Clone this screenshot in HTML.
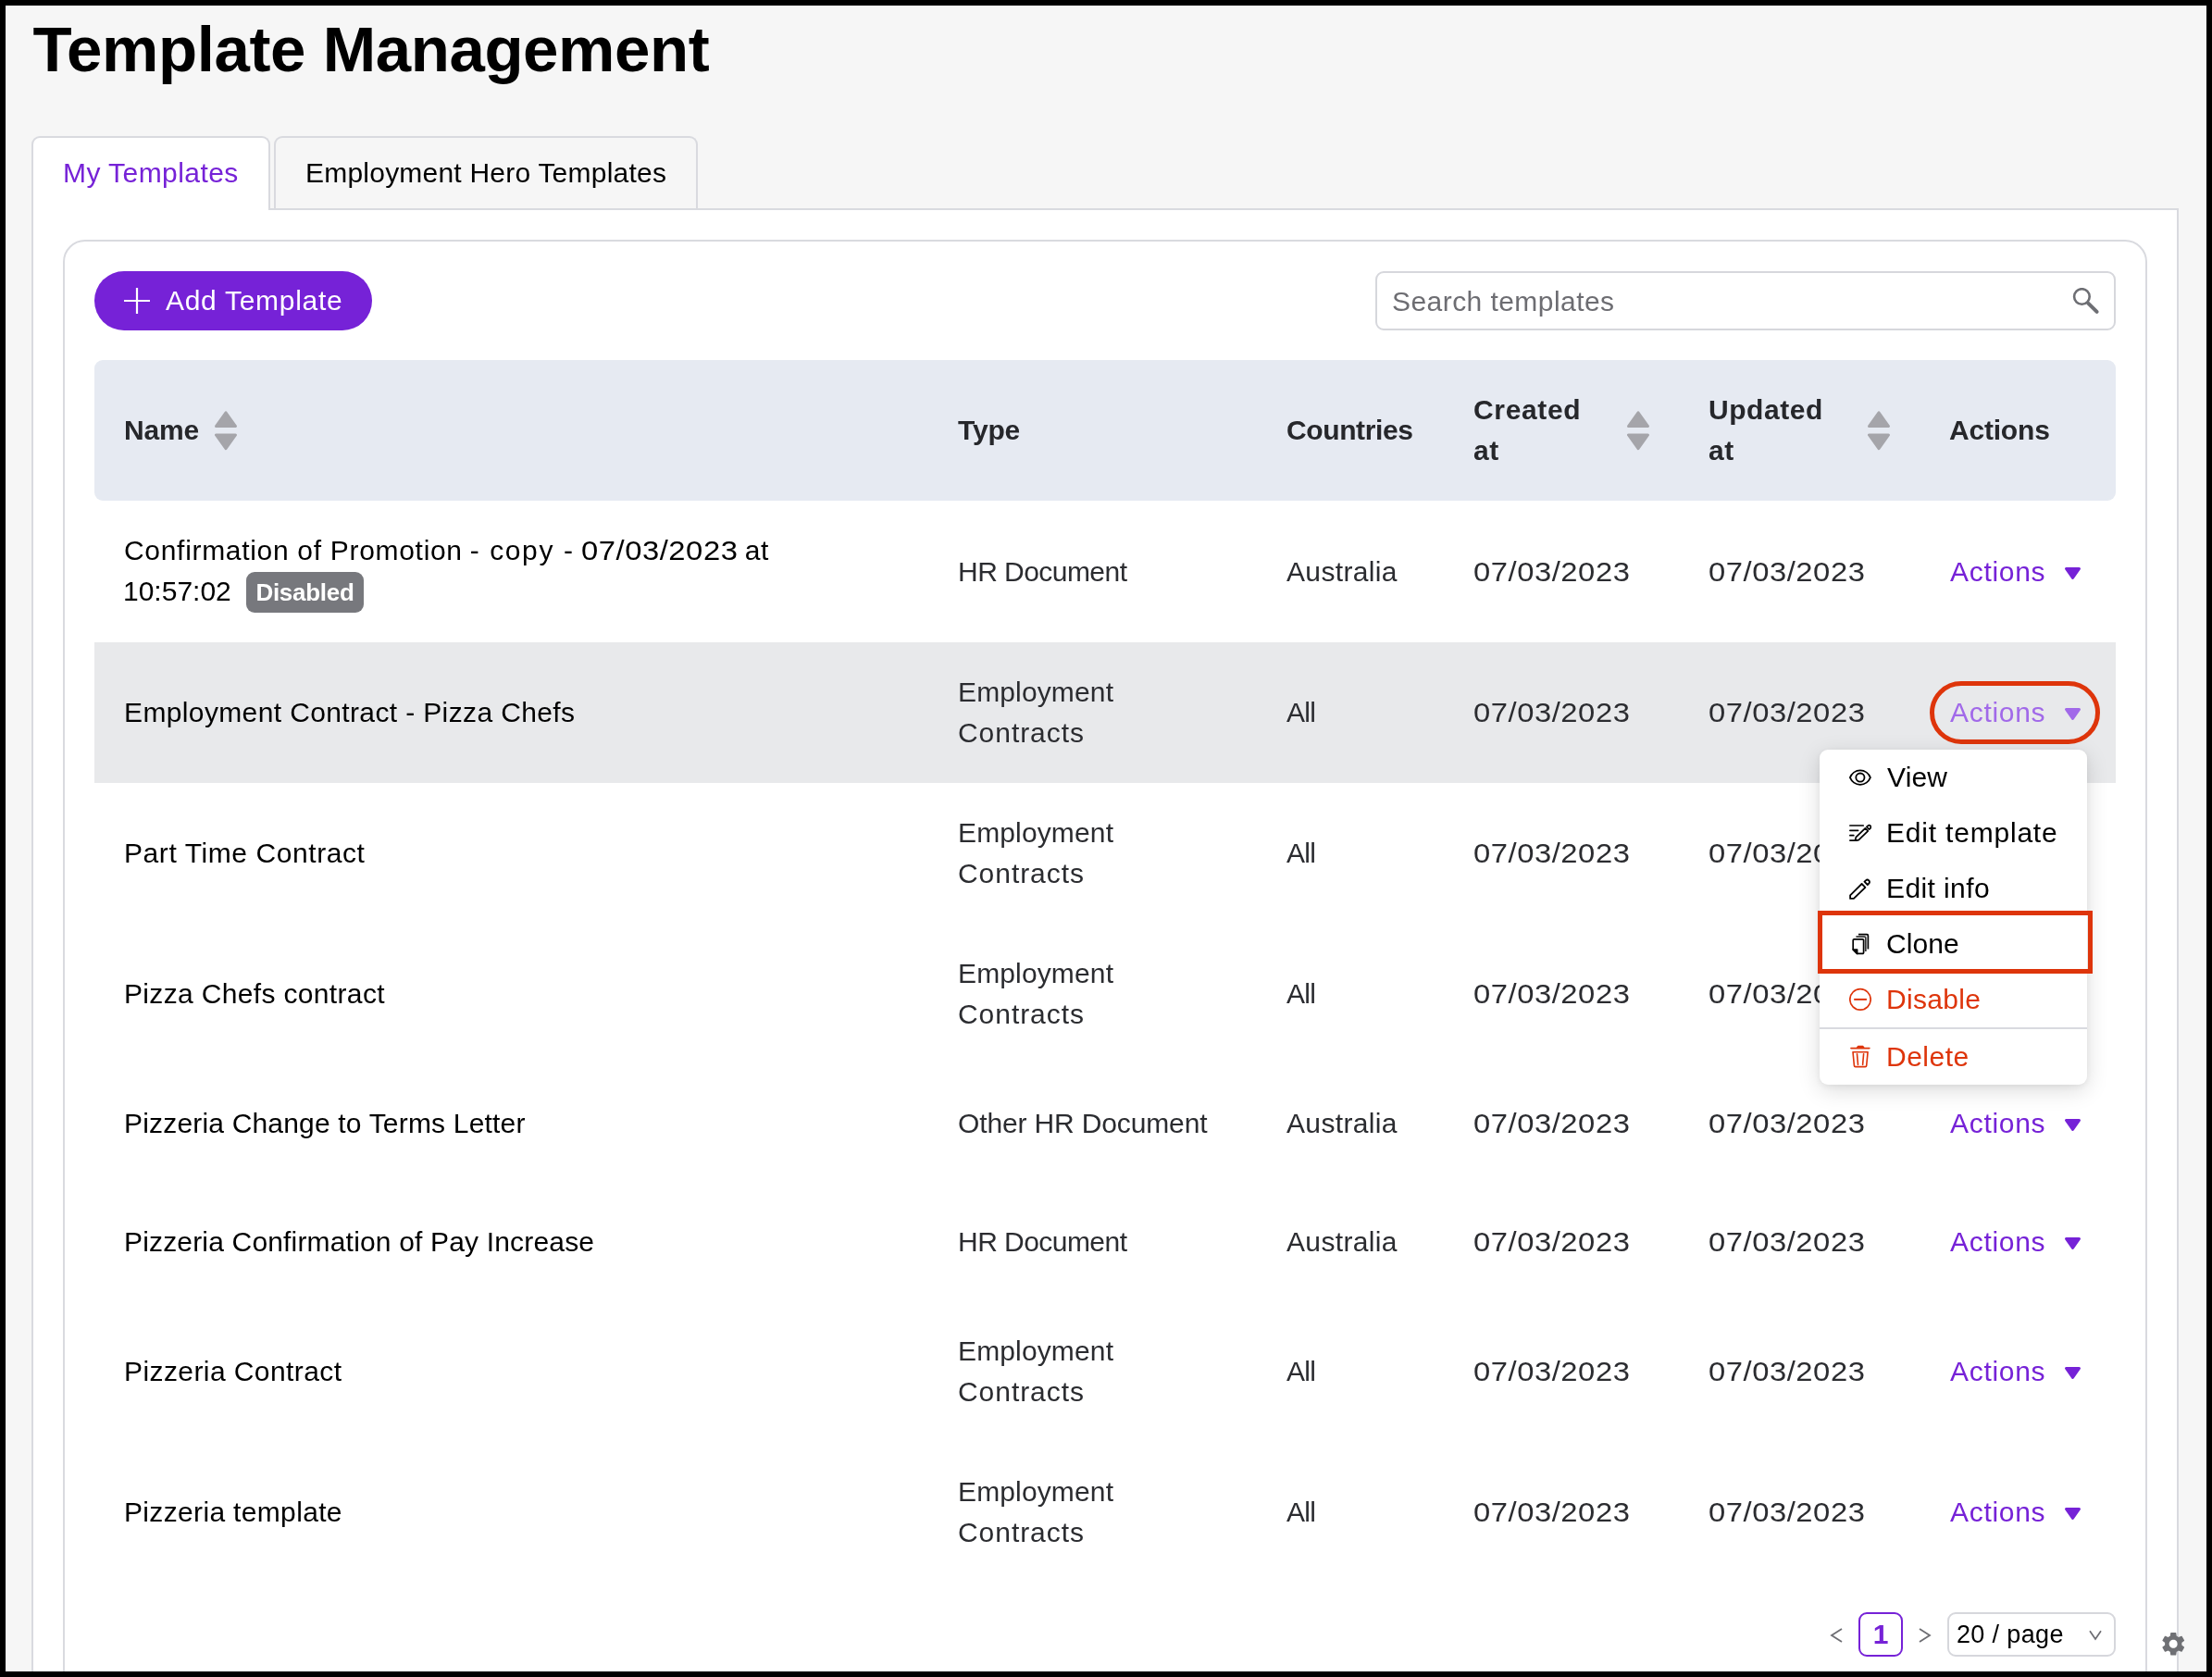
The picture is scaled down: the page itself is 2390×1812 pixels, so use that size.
<!DOCTYPE html>
<html lang="en">
<head>
<meta charset="utf-8">
<title>Template Management</title>
<style>
*{box-sizing:border-box;margin:0;padding:0}
html,body{width:2390px;height:1812px;overflow:hidden;background:#000}
body{font-family:"Liberation Sans",sans-serif;font-size:30px;line-height:44px;color:#000;-webkit-font-smoothing:antialiased}
#frame{position:absolute;left:6px;top:6px;width:2378px;height:1800px;background:#f6f6f6;overflow:hidden}
/* everything inside #app is positioned in page coordinates */
#app{position:absolute;left:-6px;top:-6px;width:2390px;height:1812px;will-change:transform}
.abs{position:absolute;white-space:nowrap}
h1{position:absolute;left:35.5px;top:14px;font-size:69px;line-height:80px;font-weight:bold;letter-spacing:-.42px;color:#000;white-space:nowrap}
.tab{position:absolute;top:147px;height:80px;border:2px solid #d9dadf;border-bottom:none;border-radius:9px 9px 0 0;white-space:nowrap;padding-top:16px;line-height:44px}
#tab1{left:34px;width:258px;background:#fff;color:#7622d7;padding-left:32px;z-index:2;height:80px}
#tab2{left:296px;width:458px;background:#f6f6f6;color:#000;padding-left:32px}
#panel{position:absolute;left:34px;top:225px;width:2320px;height:1700px;background:#fff;border:2px solid #d9dadf}
#card{position:absolute;left:68px;top:259px;width:2252px;height:1700px;background:#fff;border:2px solid #d9dadf;border-radius:24px}
#addbtn{position:absolute;left:102px;top:293px;width:300px;height:64px;border-radius:32px;background:#7622d7;color:#fff}
#search{position:absolute;left:1486px;top:293px;width:800px;height:64px;border:2px solid #d6d7dc;border-radius:9px;background:#fff;color:#6d6d72}
#thead{position:absolute;left:102px;top:389px;width:2184px;height:152px;background:#e6eaf2;border-radius:9px;font-weight:bold;color:#26272b}
.row{position:absolute;left:102px;width:2184px}
.row.hover{background:#e8e9eb}
.c{position:absolute;white-space:nowrap;line-height:44px;height:44px}
.name{color:#000}
.txt{color:#2b2c30}
.link{color:#7622d7;letter-spacing:.7px}
.lite{color:#a169e9}
.date{letter-spacing:.5px;transform:scaleX(1.092);transform-origin:0 50%}
.tri{position:absolute}
#badge{position:absolute;left:164px;top:77px;width:127px;height:44px;border-radius:9px;background:#77787d;color:#fff;font-weight:bold;font-size:26px;line-height:44px;text-align:center}
#menu{position:absolute;left:1966px;top:810px;width:289px;height:362px;background:#fff;border-radius:9px;box-shadow:0 6px 24px rgba(0,0,0,.14),0 2px 6px rgba(0,0,0,.06)}
#menu .mi{position:absolute;left:72px;white-space:nowrap;line-height:44px;color:#000}
#menu .red{color:#de350b}
#menu svg{position:absolute}
#sep{position:absolute;left:0;top:300px;width:289px;height:2px;background:#d9dadf}
#hl1{position:absolute;left:2085px;top:736px;width:184px;height:68px;border:5px solid #de350b;border-radius:34px}
#hl2{position:absolute;left:1964px;top:984px;width:297px;height:68px;border:5px solid #de350b}
#pg1{position:absolute;left:2008px;top:1742px;width:48px;height:48px;border:2px solid #7622d7;border-radius:9px;background:#fff;color:#7622d7;font-weight:bold;font-size:30px;line-height:44px;text-align:center}
#pgsize{position:absolute;left:2104px;top:1742px;width:182px;height:48px;border:2px solid #d6d7dc;border-radius:9px;background:#fff;font-size:27px;line-height:44px;color:#000}
</style>
</head>
<body>
<div id="frame"><div id="app">

<h1 id="title">Template Management</h1>

<div class="tab" id="tab1"><span id="t_tab1" style="letter-spacing:.44px">My Templates</span></div>
<div class="tab" id="tab2"><span id="t_tab2" style="letter-spacing:.22px">Employment Hero Templates</span></div>
<div id="panel"></div>
<div id="card"></div>

<div id="addbtn">
  <svg class="abs" style="left:32px;top:18px" width="28" height="28" viewBox="0 0 28 28"><path d="M14 0v28M0 14h28" stroke="#fff" stroke-width="2.2" fill="none"/></svg>
  <span class="abs" id="t_add" style="left:77px;top:10px;letter-spacing:.7px">Add Template</span>
</div>

<div id="search">
  <span class="abs" id="t_search" style="left:16px;top:9px;letter-spacing:.44px">Search templates</span>
  <svg class="abs" style="left:751px;top:16px" width="30" height="30" viewBox="0 0 30 30"><circle cx="10.4" cy="9.5" r="8.3" stroke="#6d6e73" stroke-width="2.6" fill="none"/><path d="M17.2 16.6L26.6 25.9" stroke="#6d6e73" stroke-width="4" stroke-linecap="round"/></svg>
</div>

<div id="thead">
  <span class="c" id="h_name" style="left:32px;top:54px;letter-spacing:-.2px">Name</span>
  <svg class="tri" style="left:129px;top:53px" width="26" height="46" viewBox="0 0 26 46"><path d="M13 3.75L23.5 18.5H2.5ZM2.5 28H23.5L13 42.75Z" fill="#a5a5aa" stroke="#a5a5aa" stroke-width="3" stroke-linejoin="round"/></svg>
  <span class="c" id="h_type" style="left:933px;top:54px;letter-spacing:-.17px">Type</span>
  <span class="c" id="h_countries" style="left:1288px;top:54px;letter-spacing:-.38px">Countries</span>
  <span class="c" id="h_created" style="left:1490px;top:32px;letter-spacing:.65px">Created</span>
  <span class="c" id="h_created2" style="left:1490px;top:76px;letter-spacing:.65px">at</span>
  <svg class="tri" style="left:1654.5px;top:53px" width="26" height="46" viewBox="0 0 26 46"><path d="M13 3.75L23.5 18.5H2.5ZM2.5 28H23.5L13 42.75Z" fill="#a5a5aa" stroke="#a5a5aa" stroke-width="3" stroke-linejoin="round"/></svg>
  <span class="c" id="h_updated" style="left:1744px;top:32px;letter-spacing:.55px">Updated</span>
  <span class="c" id="h_updated2" style="left:1744px;top:76px;letter-spacing:.55px">at</span>
  <svg class="tri" style="left:1914.5px;top:53px" width="26" height="46" viewBox="0 0 26 46"><path d="M13 3.75L23.5 18.5H2.5ZM2.5 28H23.5L13 42.75Z" fill="#a5a5aa" stroke="#a5a5aa" stroke-width="3" stroke-linejoin="round"/></svg>
  <span class="c" id="h_actions" style="left:2004px;top:54px;letter-spacing:-.2px">Actions</span>
</div>

<div class="row" id="r1" style="top:541px;height:153px">
  <span class="c name" id="r1_name" style="left:32px;top:32px"><span id="r1_a" style="letter-spacing:.69px">Confirmation of Promotion</span><span id="r1_b" style="letter-spacing:1.6px;margin-left:-2px"> - copy - </span><span id="r1_c" style="display:inline-block;letter-spacing:.5px;transform:scaleX(1.092);transform-origin:0 50%;margin-left:-2px;margin-right:14.3px">07/03/2023</span><span id="r1_d" style="letter-spacing:.5px;margin-left:-2px"> at</span></span>
  <span class="c name" id="r1_name2" style="left:31px;top:76px;letter-spacing:0">10:57:02</span>
  <span id="badge"><span id="t_badge" style="letter-spacing:-.27px">Disabled</span></span>
  <span class="c txt" id="r1_type" style="left:933px;top:55px;letter-spacing:-0.54px">HR Document</span>
  <span class="c txt" id="r1_country" style="left:1288px;top:55px;letter-spacing:0.35px">Australia</span>
  <span class="c txt date" id="r1_created" style="left:1489.75px;top:55px">07/03/2023</span>
  <span class="c txt date" id="r1_updated" style="left:1743.75px;top:55px">07/03/2023</span>
  <span class="c link" id="r1_actions" style="left:2005px;top:55px">Actions</span>
  <svg class="tri" style="left:2128px;top:71px" width="19" height="15" viewBox="0 0 19 15"><path d="M2.5 2.5H16.5L9.5 12.5Z" fill="#7622d7" stroke="#7622d7" stroke-width="3" stroke-linejoin="round"/></svg>
</div>
<div class="row hover" id="r2" style="top:694px;height:152px">
  <span class="c name" id="r2_name" style="left:32px;top:54px;letter-spacing:0.37px">Employment Contract - Pizza Chefs</span>
  <span class="c txt" id="r2_type" style="left:933px;top:32px;letter-spacing:0.14px">Employment</span>
  <span class="c txt" id="r2_type2" style="left:933px;top:76px;letter-spacing:0.95px">Contracts</span>
  <span class="c txt" id="r2_country" style="left:1288px;top:54px;letter-spacing:-0.67px">All</span>
  <span class="c txt date" id="r2_created" style="left:1489.75px;top:54px">07/03/2023</span>
  <span class="c txt date" id="r2_updated" style="left:1743.75px;top:54px">07/03/2023</span>
  <span class="c link lite" id="r2_actions" style="left:2005px;top:54px">Actions</span>
  <svg class="tri" style="left:2128px;top:70px" width="19" height="15" viewBox="0 0 19 15"><path d="M2.5 2.5H16.5L9.5 12.5Z" fill="#a169e9" stroke="#a169e9" stroke-width="3" stroke-linejoin="round"/></svg>
</div>
<div class="row" id="r3" style="top:846px;height:152px">
  <span class="c name" id="r3_name" style="left:32px;top:54px;letter-spacing:0.58px">Part Time Contract</span>
  <span class="c txt" id="r3_type" style="left:933px;top:32px;letter-spacing:0.14px">Employment</span>
  <span class="c txt" id="r3_type2" style="left:933px;top:76px;letter-spacing:0.95px">Contracts</span>
  <span class="c txt" id="r3_country" style="left:1288px;top:54px;letter-spacing:-0.67px">All</span>
  <span class="c txt date" id="r3_created" style="left:1489.75px;top:54px">07/03/2023</span>
  <span class="c txt date" id="r3_updated" style="left:1743.75px;top:54px">07/03/2023</span>
  <span class="c link" id="r3_actions" style="left:2005px;top:54px">Actions</span>
  <svg class="tri" style="left:2128px;top:70px" width="19" height="15" viewBox="0 0 19 15"><path d="M2.5 2.5H16.5L9.5 12.5Z" fill="#7622d7" stroke="#7622d7" stroke-width="3" stroke-linejoin="round"/></svg>
</div>
<div class="row" id="r4" style="top:998px;height:152px">
  <span class="c name" id="r4_name" style="left:32px;top:54px;letter-spacing:0.34px">Pizza Chefs contract</span>
  <span class="c txt" id="r4_type" style="left:933px;top:32px;letter-spacing:0.14px">Employment</span>
  <span class="c txt" id="r4_type2" style="left:933px;top:76px;letter-spacing:0.95px">Contracts</span>
  <span class="c txt" id="r4_country" style="left:1288px;top:54px;letter-spacing:-0.67px">All</span>
  <span class="c txt date" id="r4_created" style="left:1489.75px;top:54px">07/03/2023</span>
  <span class="c txt date" id="r4_updated" style="left:1743.75px;top:54px">07/03/2023</span>
  <span class="c link" id="r4_actions" style="left:2005px;top:54px">Actions</span>
  <svg class="tri" style="left:2128px;top:70px" width="19" height="15" viewBox="0 0 19 15"><path d="M2.5 2.5H16.5L9.5 12.5Z" fill="#7622d7" stroke="#7622d7" stroke-width="3" stroke-linejoin="round"/></svg>
</div>
<div class="row" id="r5" style="top:1150px;height:128px">
  <span class="c name" id="r5_name" style="left:32px;top:42px;letter-spacing:0.18px">Pizzeria Change to Terms Letter</span>
  <span class="c txt" id="r5_type" style="left:933px;top:42px;letter-spacing:-0.14px">Other HR Document</span>
  <span class="c txt" id="r5_country" style="left:1288px;top:42px;letter-spacing:0.35px">Australia</span>
  <span class="c txt date" id="r5_created" style="left:1489.75px;top:42px">07/03/2023</span>
  <span class="c txt date" id="r5_updated" style="left:1743.75px;top:42px">07/03/2023</span>
  <span class="c link" id="r5_actions" style="left:2005px;top:42px">Actions</span>
  <svg class="tri" style="left:2128px;top:58px" width="19" height="15" viewBox="0 0 19 15"><path d="M2.5 2.5H16.5L9.5 12.5Z" fill="#7622d7" stroke="#7622d7" stroke-width="3" stroke-linejoin="round"/></svg>
</div>
<div class="row" id="r6" style="top:1278px;height:128px">
  <span class="c name" id="r6_name" style="left:32px;top:42px;letter-spacing:0.17px">Pizzeria Confirmation of Pay Increase</span>
  <span class="c txt" id="r6_type" style="left:933px;top:42px;letter-spacing:-0.54px">HR Document</span>
  <span class="c txt" id="r6_country" style="left:1288px;top:42px;letter-spacing:0.35px">Australia</span>
  <span class="c txt date" id="r6_created" style="left:1489.75px;top:42px">07/03/2023</span>
  <span class="c txt date" id="r6_updated" style="left:1743.75px;top:42px">07/03/2023</span>
  <span class="c link" id="r6_actions" style="left:2005px;top:42px">Actions</span>
  <svg class="tri" style="left:2128px;top:58px" width="19" height="15" viewBox="0 0 19 15"><path d="M2.5 2.5H16.5L9.5 12.5Z" fill="#7622d7" stroke="#7622d7" stroke-width="3" stroke-linejoin="round"/></svg>
</div>
<div class="row" id="r7" style="top:1406px;height:152px">
  <span class="c name" id="r7_name" style="left:32px;top:54px;letter-spacing:0.41px">Pizzeria Contract</span>
  <span class="c txt" id="r7_type" style="left:933px;top:32px;letter-spacing:0.14px">Employment</span>
  <span class="c txt" id="r7_type2" style="left:933px;top:76px;letter-spacing:0.95px">Contracts</span>
  <span class="c txt" id="r7_country" style="left:1288px;top:54px;letter-spacing:-0.67px">All</span>
  <span class="c txt date" id="r7_created" style="left:1489.75px;top:54px">07/03/2023</span>
  <span class="c txt date" id="r7_updated" style="left:1743.75px;top:54px">07/03/2023</span>
  <span class="c link" id="r7_actions" style="left:2005px;top:54px">Actions</span>
  <svg class="tri" style="left:2128px;top:70px" width="19" height="15" viewBox="0 0 19 15"><path d="M2.5 2.5H16.5L9.5 12.5Z" fill="#7622d7" stroke="#7622d7" stroke-width="3" stroke-linejoin="round"/></svg>
</div>
<div class="row" id="r8" style="top:1558px;height:152px">
  <span class="c name" id="r8_name" style="left:32px;top:54px;letter-spacing:0.34px">Pizzeria template</span>
  <span class="c txt" id="r8_type" style="left:933px;top:32px;letter-spacing:0.14px">Employment</span>
  <span class="c txt" id="r8_type2" style="left:933px;top:76px;letter-spacing:0.95px">Contracts</span>
  <span class="c txt" id="r8_country" style="left:1288px;top:54px;letter-spacing:-0.67px">All</span>
  <span class="c txt date" id="r8_created" style="left:1489.75px;top:54px">07/03/2023</span>
  <span class="c txt date" id="r8_updated" style="left:1743.75px;top:54px">07/03/2023</span>
  <span class="c link" id="r8_actions" style="left:2005px;top:54px">Actions</span>
  <svg class="tri" style="left:2128px;top:70px" width="19" height="15" viewBox="0 0 19 15"><path d="M2.5 2.5H16.5L9.5 12.5Z" fill="#7622d7" stroke="#7622d7" stroke-width="3" stroke-linejoin="round"/></svg>
</div>

<div id="pager">
  <svg class="abs" style="left:1976px;top:1758px" width="16" height="18" viewBox="0 0 16 18"><path d="M14 2L3 9L14 16" stroke="#6d6d72" stroke-width="1.8" fill="none"/></svg>
  <div id="pg1"><span id="t_pg1">1</span></div>
  <svg class="abs" style="left:2072px;top:1758px" width="16" height="18" viewBox="0 0 16 18"><path d="M2 2L13 9L2 16" stroke="#6d6d72" stroke-width="1.8" fill="none"/></svg>
  <div id="pgsize"><span class="abs" id="t_pgsize" style="left:8px;top:0;letter-spacing:.35px">20 / page</span>
    <svg class="abs" style="left:150px;top:16px" width="16" height="14" viewBox="0 0 16 14"><path d="M2 2.2L8 11L14 2.2" stroke="#6d6d72" stroke-width="1.7" fill="none"/></svg>
  </div>
</div>

<svg class="abs" id="gear" style="left:2332.5px;top:1761px" width="30.5" height="30.5" viewBox="0 0 24 24"><path fill="#6f7074" d="M19.14,12.94c0.04-0.3,0.06-0.61,0.06-0.94c0-0.32-0.02-0.64-0.07-0.94l2.03-1.58c0.18-0.14,0.23-0.41,0.12-0.61 l-1.92-3.32c-0.12-0.22-0.37-0.29-0.59-0.22l-2.39,0.96c-0.5-0.38-1.03-0.7-1.62-0.94L14.4,2.81c-0.04-0.24-0.24-0.41-0.48-0.41 h-3.84c-0.24,0-0.43,0.17-0.47,0.41L9.25,5.35C8.66,5.59,8.12,5.92,7.63,6.29L5.24,5.33c-0.22-0.08-0.47,0-0.59,0.22L2.74,8.87 C2.62,9.08,2.66,9.34,2.86,9.48l2.03,1.58C4.84,11.36,4.8,11.69,4.8,12s0.02,0.64,0.07,0.94l-2.03,1.58 c-0.18,0.14-0.23,0.41-0.12,0.61l1.92,3.32c0.12,0.22,0.37,0.29,0.59,0.22l2.39-0.96c0.5,0.38,1.03,0.7,1.62,0.94l0.36,2.54 c0.05,0.24,0.24,0.41,0.48,0.41h3.84c0.24,0,0.44-0.17,0.47-0.41l0.36-2.54c0.59-0.24,1.13-0.56,1.62-0.94l2.39,0.96 c0.22,0.08,0.47,0,0.59-0.22l1.92-3.32c0.12-0.22,0.07-0.47-0.12-0.61L19.14,12.94z M12,15.6c-1.98,0-3.6-1.62-3.6-3.6 s1.62-3.6,3.6-3.6s3.6,1.62,3.6,3.6S13.98,15.6,12,15.6z"/></svg>

<div id="hl1"></div>

<div id="menu">
  <svg style="left:32px;top:17px" width="24" height="26" viewBox="0 0 24 26" fill="none" stroke="#000" stroke-width="1.8" stroke-linejoin="round"><path d="M0.9 13.1C2.6 9 6.8 5.4 11.9 5.4S21.2 9 22.9 13.1C21.2 17.2 17 20.8 11.9 20.8S2.6 17.2 0.9 13.1Z"/><circle cx="11.9" cy="13.1" r="4.6"/></svg>
  <span class="mi" id="m_view" style="left:73px;top:8px;letter-spacing:.17px">View</span>
  <svg style="left:32px;top:77px" width="24" height="26" viewBox="0 0 24 26" fill="none" stroke="#000" stroke-width="1.7" stroke-linecap="round" stroke-linejoin="round"><path d="M0.9 5H15.2M0.9 10.3H9.6M0.9 15.7H4.8M0.9 21.1H8.6"/><path d="M6.5 21L7.3 17.6L17.4 7.9L20.3 10.9L10.2 20.6Z"/><path d="M18.9 6.5L20.1 5.4C21 4.6 22.2 4.6 22.9 5.3C23.6 6.1 23.5 7.3 22.7 8.1L21.6 9.2Z"/></svg>
  <span class="mi" id="m_edit" style="top:68px;letter-spacing:.8px">Edit template</span>
  <svg style="left:32px;top:137px" width="24" height="26" viewBox="0 0 24 26" fill="none" stroke="#000" stroke-width="1.8" stroke-linejoin="round"><path d="M1.1 23.9V20.3L13.6 8L17.4 11.8L4.9 23.9Z"/><path d="M16.5 5.7L17.9 4.3C18.9 3.4 20.3 3.4 21.2 4.3C22.1 5.2 22.1 6.6 21.2 7.6L19.8 9Z"/></svg>
  <span class="mi" id="m_info" style="top:128px;letter-spacing:.4px">Edit info</span>
  <svg style="left:32px;top:197px" width="24" height="26" viewBox="0 0 24 26" fill="none" stroke="#000" stroke-width="1.7" stroke-linejoin="round"><path d="M5.4 7.8H14.4A1.2 1.2 0 0 1 15.6 9V22.2A1.2 1.2 0 0 1 14.4 23.4H8.6L4.2 19V9A1.2 1.2 0 0 1 5.4 7.8Z"/><path d="M4.2 19H8.6V23.4Z" fill="#000"/><path d="M7.4 5.2H16.6Q17.8 5.2 17.8 6.4V21" stroke="#333"/><path d="M10 2.7H19.2Q20.4 2.7 20.4 3.9V18.6"/></svg>
  <span class="mi" id="m_clone" style="top:188px;letter-spacing:.1px">Clone</span>
  <svg style="left:32px;top:257px" width="24" height="26" viewBox="0 0 24 26" fill="none" stroke="#de350b" stroke-width="1.7"><circle cx="12" cy="12.9" r="11.2"/><path d="M5.2 12.9H18.9" stroke-width="2"/></svg>
  <span class="mi red" id="m_disable" style="top:248px;letter-spacing:.3px">Disable</span>
  <div id="sep"></div>
  <svg style="left:32px;top:319px" width="24" height="26" viewBox="0 0 24 26" fill="none" stroke="#de350b" stroke-width="1.6" stroke-linejoin="round" stroke-linecap="round"><path d="M1.9 3.6H21.9"/><path d="M8.6 3.2L9.6 1.6H14.8L15.8 3.2Z" fill="#de350b"/><path d="M4 7.7H20.1L18.7 22.4Q18.6 23.6 17.4 23.6H6.7Q5.5 23.6 5.4 22.4Z"/><path d="M8.5 9.8L9.5 21.4M15.6 9.8L14.6 21.4"/></svg>
  <span class="mi red" id="m_delete" style="top:310px;letter-spacing:.5px">Delete</span>
</div>

<div id="hl2"></div>

</div></div>
</body>
</html>
